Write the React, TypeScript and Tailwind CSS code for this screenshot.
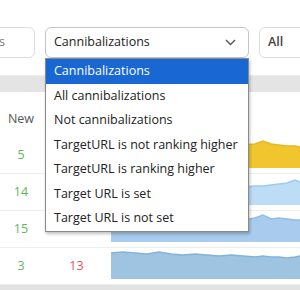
import React from "react";

type Row = { newCount: number; lost?: number; fill: string; stroke: string; top: number[] };

const xs = [0, 12, 24, 36, 48, 60, 72, 84, 96, 108, 120, 132, 144, 152, 160, 168, 176, 184, 189];

const rows: Row[] = [
  { newCount: 5, fill: "#f0c52e", stroke: "#e6b922", top: [12, 10, 11, 9, 10, 11, 9, 10, 9, 10, 9, 8, 7, 4, 7, 8, 9, 9, 10] },
  { newCount: 14, fill: "#bddcf6", stroke: "#9dcaf0", top: [16, 15, 14, 15, 14, 13, 14, 13, 14, 13, 12, 13, 12, 12, 11, 10, 9, 6, 8] },
  { newCount: 15, fill: "#a9ccee", stroke: "#8fbce8", top: [10, 9, 10, 9, 8, 9, 8, 9, 8, 9, 8, 9, 7, 4, 8, 7, 8, 9, 9] },
  { newCount: 3, lost: 13, fill: "#9fc4e2", stroke: "#84b3da", top: [5, 4, 5, 6, 4, 6, 7, 6, 7, 8, 7, 8, 9, 8, 9, 9, 10, 9, 8] },
];

function Spark({ row }: { row: Row }) {
  const pts = xs.map((x, i) => `${x},${row.top[i]}`).join(" L");
  return (
    <svg viewBox="0 0 189 31" preserveAspectRatio="none" className="block h-[31px] w-full">
      <path d={`M${pts} L189,31 L0,31 Z`} fill={row.fill} />
      <path d={`M${pts}`} fill="none" stroke={row.stroke} strokeWidth="1.5" />
    </svg>
  );
}

const options = [
  "Cannibalizations",
  "All cannibalizations",
  "Not cannibalizations",
  "TargetURL is not ranking higher",
  "TargetURL is ranking higher",
  "Target URL is set",
  "Target URL is not set",
];

export default function App() {
  return (
    <div className="relative h-[290px] w-[300px] overflow-hidden bg-white font-['Open_Sans',sans-serif] text-[12.5px] text-[#222]">
      <div className="flex h-[75px] items-start gap-[10px] pt-[27px]">
        <div className="-ml-[60px] flex h-[31px] w-[95px] shrink-0 items-center justify-end rounded-[6px] border border-[#dcdcdc] pr-[29px] text-[#777]">
          s
        </div>
        <div className="flex h-[31px] w-[204px] shrink-0 items-center justify-between rounded-[6px] border border-[#c4c4c4] pl-[8px] pr-[12px]">
          <span>Cannibalizations</span>
          <svg width="11" height="7" viewBox="0 0 11 7" fill="none" stroke="#555" strokeWidth="1.4">
            <path d="M1 1l4.5 4.5L10 1" />
          </svg>
        </div>
        <div className="flex h-[31px] w-[60px] shrink-0 items-center rounded-[6px] border border-[#dcdcdc] pl-[8px] font-semibold text-[#444]">
          All
        </div>
      </div>

      <div className="h-[17px] border-t border-[#ececec] bg-[#e4e4e4]" />

      <div className="grid h-[45px] grid-cols-[42px_69px_1fr] items-center">
        <span className="pt-[9px] text-center text-[#555]">New</span>
      </div>

      {rows.map((r) => (
        <div key={r.newCount} className="grid h-[37px] grid-cols-[42px_69px_1fr] border-b border-[#eee]">
          <span className="self-center text-center text-[#5cb85c]">{r.newCount}</span>
          <span className="self-center text-center text-[#e8505b]">{r.lost ?? ""}</span>
          <Spark row={r} />
        </div>
      ))}

      <div className="h-[6px] bg-[#e2e2e2]" />

      <ul className="absolute left-[45px] top-[58px] w-[204px] border border-[#8a8a8a] bg-white shadow-[1px_2px_3px_rgba(0,0,0,0.25)]">
        {options.map((o, i) => (
          <li
            key={o}
            className={
              i === 0
                ? "flex h-[25px] items-center bg-[#1967d2] pl-[8px] text-white"
                : "flex h-[24.5px] items-center pl-[8px] text-[#222]"
            }
          >
            {o}
          </li>
        ))}
      </ul>
    </div>
  );
}
